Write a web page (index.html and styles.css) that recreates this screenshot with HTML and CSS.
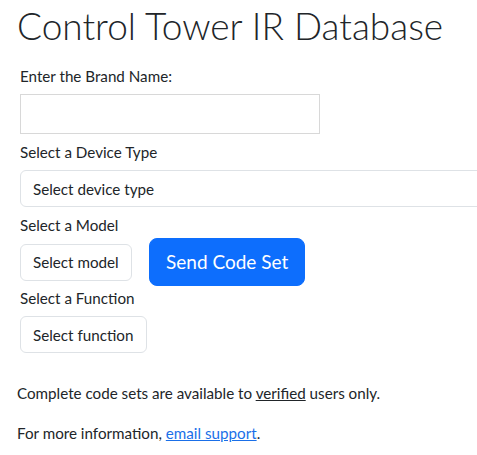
FILE: index.html
```html
<!DOCTYPE html>
<html lang="en">
<head>
    <meta charset="UTF-8">
    <meta name="viewport" content="width=device-width, initial-scale=1.0">
    <title>Control Tower IR Database</title>
    <link rel="stylesheet" href="styles.css">
</head>
<body>
    <div class="main">
        <h1 class="heading">Control Tower IR Database</h1>
        <form class="lookup">
            <label class="field-label" for="brand">Enter the Brand Name:</label>
            <input type="text" class="brand-input" id="brand">

            <label class="field-label" for="device">Select a Device Type</label>
            <select class="picker picker-wide" id="device">
                <option>Select device type</option>
            </select>

            <label class="field-label label-tight" for="model">Select a Model</label>
            <div class="model-row">
                <select class="picker" id="model">
                    <option>Select model</option>
                </select>
                <button type="button" class="send-btn">Send Code Set</button>
            </div>

            <label class="field-label" for="func">Select a Function</label>
            <select class="picker" id="func">
                <option>Select function</option>
            </select>
        </form>
        <p class="note">Complete code sets are available to <a href="#" class="plain-link">verified</a> users only.</p>
        <p class="note">For more information, <a href="#" class="blue-link">email support</a>.</p>
    </div>
</body>
</html>
```

FILE: styles.css
```css
html, body
{
    margin: 0;
    padding: 0;
    overflow: hidden;
}
*
{
    box-sizing: border-box;
}
body
{
    font-family: Lato, "Open Sans", sans-serif;
    font-size: 15.2px;
    line-height: 24px;
    color: #212529;
    background: #fff;
}
.main
{
    padding: 0 17px;
    width: 520px;
}
.heading
{
    font-weight: 300;
    font-size: 37px;
    line-height: 44px;
    margin: 4px 0 0 0;
}
.lookup
{
    display: flex;
    flex-direction: column;
    align-items: flex-start;
    padding-left: 3px;
    margin-top: 16px;
}
.field-label
{
    display: block;
    margin-bottom: 6px;
}
.label-tight
{
    margin-bottom: 1px;
}
.brand-input
{
    width: 300px;
    height: 40px;
    border: 1px solid #d8d8d8;
    border-radius: 0;
    margin: 0 0 6px 0;
    padding: 0 12px;
    font: inherit;
}
.picker
{
    -webkit-appearance: none;
    appearance: none;
    font: inherit;
    color: #212529;
    background: #fff;
    border: 1px solid #dee2e6;
    border-radius: 6px;
    height: 37px;
    padding: 0 12px;
    margin-bottom: 6px;
}
.picker-wide
{
    width: 480px;
}
.model-row
{
    display: flex;
    align-items: center;
    gap: 17px;
}
.model-row .picker
{
    margin-bottom: 0;
}
.send-btn
{
    font: inherit;
    font-size: 19px;
    height: 48px;
    padding: 0 16px;
    color: #fff;
    background-color: #0d6efd;
    border: 1px solid #0d6efd;
    border-radius: 8px;
    cursor: pointer;
}
.note
{
    margin: 22px 0 0 0;
}
.note + .note
{
    margin-top: 16px;
}
.plain-link
{
    color: #212529;
}
.blue-link
{
    color: #1a6fe8;
}
```
